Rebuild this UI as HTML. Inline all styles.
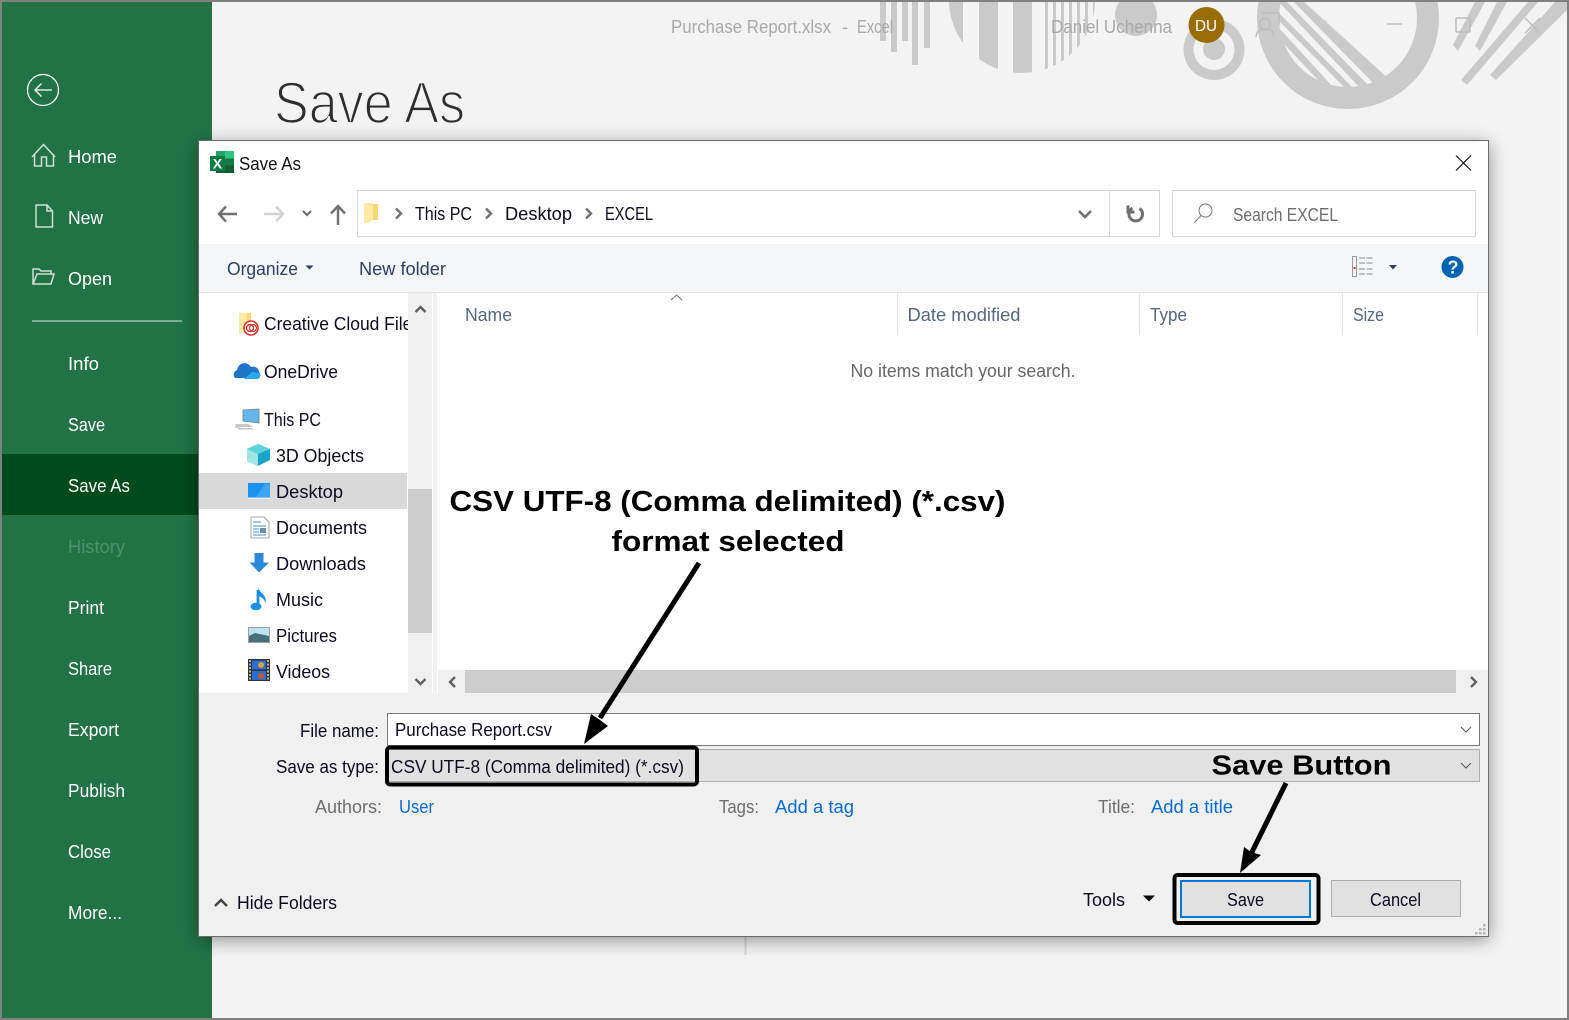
<!DOCTYPE html>
<html lang="en"><head><meta charset="utf-8"><title>Save As</title>
<style>
html,body{margin:0;padding:0;width:1569px;height:1020px;overflow:hidden;background:#f3f3f3}
svg{display:block}
text{font-family:"Liberation Sans",sans-serif;font-size:18px;white-space:pre}
.s text{fill:#fff}
.n text{fill:#0b0b20}
.h text{fill:#56677f}
.m text{fill:#6e6e6e}
.b text{fill:#0a6bd0}
.a text{fill:#000;font-weight:bold}
</style></head><body>
<svg xmlns="http://www.w3.org/2000/svg" width="1569" height="1020" viewBox="0 0 1569 1020">
<defs>
<filter id="sh" x="-5%" y="-8%" width="110%" height="116%"><feDropShadow dx="0" dy="3" stdDeviation="9" flood-color="#000" flood-opacity=".42"/></filter>
<clipPath id="c1"><circle cx="1022" cy="0" r="73"/></clipPath>
<clipPath id="c2"><circle cx="1348" cy="18" r="69"/></clipPath>
<clipPath id="c3"><rect x="199" y="293" width="209" height="400"/></clipPath>
<clipPath id="c4"><rect x="2" y="2" width="1565" height="1016"/></clipPath>
</defs>
<rect width="1569" height="1020" fill="#f3f3f3"/>
<!-- decoration -->
<g fill="#cacaca" clip-path="url(#c4)">
<rect x="880" y="0" width="6" height="41"/><rect x="891" y="0" width="6" height="52"/><rect x="902" y="0" width="6" height="41"/><rect x="912" y="0" width="6" height="65"/><rect x="924" y="0" width="6" height="48"/>
<g clip-path="url(#c1)"><rect x="949" y="0" width="14" height="80"/><rect x="979" y="0" width="19" height="80"/><rect x="1013" y="0" width="19" height="80"/><rect x="1045" y="0" width="3" height="80"/><rect x="1053" y="0" width="3" height="80"/><rect x="1061" y="0" width="3" height="80"/><rect x="1069" y="0" width="3" height="80"/><rect x="1077" y="0" width="3" height="80"/><rect x="1085" y="0" width="3" height="80"/><rect x="1093" y="0" width="3" height="80"/></g>
<circle cx="1136" cy="15" r="21"/>
<path fill-rule="evenodd" d="M1214 19a30.500 30.500 0 1 0 .01 0zM1214 29a20.500 20.500 0 1 1-.01 0z"/>
<circle cx="1214" cy="49" r="11"/>
<circle cx="1348" cy="18" r="80" fill="none" stroke="#cacaca" stroke-width="22"/>
<g clip-path="url(#c2)">
<polygon points="1302,0 1390,80 1373,83 1292,0"/>
<polygon points="1285,0 1370,87 1360,88 1277,0"/>
<polygon points="1279,13 1355,90 1347,90 1279,21"/>
<polygon points="1279,28 1333,87 1320,82 1285,45 1279,45"/>
</g>
<polygon points="1453,45 1458,51 1485,2 1475,2"/>
<polygon points="1475,46 1480,51 1507,2 1497,2"/>
<polygon points="1461,80 1467,85 1538,2 1528,2"/>
<polygon points="1490,75 1496,80 1567,10 1567,-5 1555,2"/>
</g>
<!-- window controls -->
<g fill="none" stroke="#bdbdbd" stroke-width="1.500">
<path d="M1387 24h15"/><rect x="1456" y="18" width="14" height="14" rx="1"/><path d="M1525 18l15 15M1540 18l-15 15"/>
<circle cx="1265" cy="24" r="5.500"/><path d="M1256 37c1-7 4-8 9-8s8 1 9 8M1262 13h17v12"/>
</g>
<text x="1319" y="31" fill="#cfcfcf" style="font-size:16px">?</text>
<g fill="#a9a9a9">
<text x="671" y="33" textLength="160" lengthAdjust="spacingAndGlyphs">Purchase Report.xlsx</text>
<text x="842" y="33">-</text>
<text x="857" y="33" textLength="36" lengthAdjust="spacingAndGlyphs">Excel</text>
<text x="1051" y="33" textLength="121" lengthAdjust="spacingAndGlyphs">Daniel Uchenna</text>
</g>
<circle cx="1206.500" cy="25" r="18" fill="#9a6c06"/>
<text x="1195" y="31" fill="#fff" textLength="22" lengthAdjust="spacingAndGlyphs" style="font-size:16px">DU</text>
<text x="274" y="123" fill="#2e2e2e" stroke="#f3f3f3" stroke-width="1.800" style="font-size:58px" textLength="191" lengthAdjust="spacingAndGlyphs">Save As</text>
<path d="M745.500 930v25" stroke="#d6d6d6" stroke-width="2"/>
<!-- sidebar -->
<rect x="2" y="2" width="210" height="1016" fill="#217346"/>
<rect x="2" y="454" width="210" height="61" fill="#004b1c"/>
<circle cx="43" cy="90" r="15.500" fill="none" stroke="#fff" stroke-width="1.300"/>
<path d="M35 90h17M41.500 83.500L35 90l6.500 6.500" fill="none" stroke="#fff" stroke-width="1.300"/>
<g fill="none" stroke="#cfe0d6" stroke-width="1.500">
<path d="M32 157l11.500-12.500L55 157M34.500 154v12h7v-9h5v9h7v-12"/>
<path d="M36 205h11l5.500 6v16H36zM47 205v6h5.500"/>
<path d="M33 284v-15h6l2 2h10v3M33 284h18l3-10H37z"/>
</g>
<rect x="32" y="320" width="150" height="2" fill="#80ad92"/>
<g class="s">
<text x="68" y="163" textLength="49" lengthAdjust="spacingAndGlyphs">Home</text>
<text x="68" y="224" textLength="35" lengthAdjust="spacingAndGlyphs">New</text>
<text x="68" y="285" textLength="44" lengthAdjust="spacingAndGlyphs">Open</text>
<text x="68" y="370" textLength="31" lengthAdjust="spacingAndGlyphs">Info</text>
<text x="68" y="431" textLength="37" lengthAdjust="spacingAndGlyphs">Save</text>
<text x="68" y="492" textLength="62" lengthAdjust="spacingAndGlyphs">Save As</text>
<text x="68" y="553" textLength="57" lengthAdjust="spacingAndGlyphs" style="fill:#4f9069">History</text>
<text x="68" y="614" textLength="36" lengthAdjust="spacingAndGlyphs">Print</text>
<text x="68" y="675" textLength="44" lengthAdjust="spacingAndGlyphs">Share</text>
<text x="68" y="736" textLength="51" lengthAdjust="spacingAndGlyphs">Export</text>
<text x="68" y="797" textLength="57" lengthAdjust="spacingAndGlyphs">Publish</text>
<text x="68" y="858" textLength="43" lengthAdjust="spacingAndGlyphs">Close</text>
<text x="68" y="919" textLength="54" lengthAdjust="spacingAndGlyphs">More...</text>
</g>
<!-- page border -->
<rect x="1" y="1" width="1567" height="1018" fill="none" stroke="#808080" stroke-width="2"/>
<!-- dialog -->
<rect x="199" y="141" width="1290" height="796" fill="#f0f0f0" filter="url(#sh)"/>
<rect x="199" y="141" width="1290" height="103" fill="#fff"/>
<rect x="199" y="244" width="1290" height="48" fill="#f5f6f7"/>
<rect x="199" y="292" width="1290" height="1" fill="#e3e3e3"/>
<rect x="199" y="293" width="1290" height="400" fill="#fff"/>
<rect x="198.500" y="140.500" width="1290" height="796" fill="none" stroke="#6b6b6b" stroke-width="1"/>
<!-- excel icon -->
<rect x="216" y="151" width="18" height="22" fill="#185c37"/><rect x="225" y="151" width="9" height="7.500" fill="#33c481"/><rect x="216" y="151" width="9" height="7.500" fill="#21a366"/><rect x="225" y="158.500" width="9" height="7" fill="#107c41"/>
<rect x="210" y="156" width="15" height="15" fill="#107c41"/><text x="212.800" y="168.500" fill="#fff" style="font-size:14px;font-weight:bold">X</text>
<text x="239" y="170" fill="#111" textLength="62" lengthAdjust="spacingAndGlyphs">Save As</text>
<path d="M1456 155.500l15 15M1471 155.500l-15 15" stroke="#111" stroke-width="1.200" fill="none"/>
<!-- nav -->
<g fill="none" stroke-width="2.400">
<path d="M219 214h18M226 206.500L219 214l7 7.500" stroke="#707070"/>
<path d="M264 214h19M276 206.500l7 7.500-7 7.500" stroke="#d2d2d2"/>
<path d="M303 211l4 4 4-4" stroke="#6e6e6e" stroke-width="2.200"/>
<path d="M338 225v-18M331 213.500l7-7.500 7 7.500" stroke="#707070"/>
</g>
<rect x="357.500" y="190.500" width="802" height="46" fill="#fff" stroke="#d9d9d9"/>
<path d="M1109.500 190v47" stroke="#d9d9d9"/>
<rect x="1172.500" y="190.500" width="303" height="46" fill="#fff" stroke="#d9d9d9"/>
<path d="M364 204h8l6 0v16h-10l-4 3z" fill="#f8d775"/><path d="M364 203h9v17l-5 3h-4z" fill="#ffe9a6"/>
<g fill="none" stroke="#707070" stroke-width="2.400">
<path d="M396 208.500l5 5-5 5M486 208.500l5 5-5 5M586 208.500l5 5-5 5"/>
<path d="M1079 211l6 6 6-6" stroke-width="2.600"/>
<path d="M1139.500 208.500a6.800 6.800 0 1 1-7-.3M1128 205.500v6.500h6.500" stroke-width="3"/>
</g>
<g fill="none" stroke="#777" stroke-width="1">
<circle cx="1205.500" cy="210.500" r="6.500"/><path d="M1201 215.500l-6.500 7"/>
</g>
<g class="n">
<text x="415" y="220" textLength="57" lengthAdjust="spacingAndGlyphs">This PC</text>
<text x="505" y="220" textLength="67" lengthAdjust="spacingAndGlyphs">Desktop</text>
<text x="605" y="220" textLength="48" lengthAdjust="spacingAndGlyphs">EXCEL</text>
</g>
<text x="1233" y="221" fill="#6d6d6d" textLength="105" lengthAdjust="spacingAndGlyphs">Search EXCEL</text>
<!-- toolbar -->
<g fill="#2c3f63">
<text x="227" y="275" textLength="71" lengthAdjust="spacingAndGlyphs">Organize</text>
<text x="359" y="275" textLength="87" lengthAdjust="spacingAndGlyphs">New folder</text>
<path d="M305.500 265.500h8l-4 4z"/><path d="M1389 265h8l-4 4.500z"/>
</g>
<g fill="none" stroke="#888">
<rect x="1352.500" y="256.500" width="4" height="20" stroke="#999"/>
<path d="M1359 258h15M1359 263h15M1359 269h15M1359 274h15" stroke-dasharray="6 1.500"/>
</g>
<rect x="1353.500" y="267" width="2" height="2" fill="#c33"/>
<circle cx="1452.500" cy="267" r="11" fill="#0063b1"/><text x="1447.500" y="273.500" fill="#fff" style="font-weight:bold;font-size:18px">?</text>
<!-- nav pane -->
<rect x="199" y="473" width="208" height="36" fill="#d9d9d9"/>
<rect x="408" y="293" width="24" height="400" fill="#f0f0f0"/>
<rect x="408" y="489" width="24" height="144" fill="#cdcdcd"/>
<rect x="433" y="293" width="4" height="400" fill="#f0f0f0"/>
<path d="M415.500 312l5-5 5 5M415.500 679l5 5 5-5" fill="none" stroke="#606060" stroke-width="2.400"/>
<g class="n">
<g clip-path="url(#c3)"><text x="264" y="330" textLength="157" lengthAdjust="spacingAndGlyphs">Creative Cloud Files</text></g>
<text x="264" y="378" textLength="74" lengthAdjust="spacingAndGlyphs">OneDrive</text>
<text x="264" y="426" textLength="57" lengthAdjust="spacingAndGlyphs">This PC</text>
<text x="276" y="462" textLength="88" lengthAdjust="spacingAndGlyphs">3D Objects</text>
<text x="276" y="498" textLength="67" lengthAdjust="spacingAndGlyphs">Desktop</text>
<text x="276" y="534" textLength="91" lengthAdjust="spacingAndGlyphs">Documents</text>
<text x="276" y="570" textLength="90" lengthAdjust="spacingAndGlyphs">Downloads</text>
<text x="276" y="606" textLength="47" lengthAdjust="spacingAndGlyphs">Music</text>
<text x="276" y="642" textLength="61" lengthAdjust="spacingAndGlyphs">Pictures</text>
<text x="276" y="678" textLength="54" lengthAdjust="spacingAndGlyphs">Videos</text>
</g>
<!-- nav icons -->
<path d="M239 313h12v9l4 2v8h-12l-4 2z" fill="#f8d775"/><path d="M239 313h8v18l-8 3z" fill="#ffe9a6"/>
<circle cx="251" cy="328" r="7" fill="#fff" stroke="#e2372b" stroke-width="1.600"/><circle cx="250" cy="328" r="3.500" fill="none" stroke="#e2372b" stroke-width="1.400"/><circle cx="253" cy="328" r="3.500" fill="none" stroke="#e2372b" stroke-width="1.200"/>
<path d="M235 378a5 5 0 0 1 2-8 7.500 7.500 0 0 1 14-3 6 6 0 0 1 8 5 3.500 3.500 0 0 1-1 6z" fill="#1c75c9"/><path d="M244 379l8-7 7 1a3.500 3.500 0 0 1-1 6z" fill="#29a8ea"/>
<path d="M243 410l16-1v14l-16-2z" fill="#65b7ea" stroke="#6c7f8f" stroke-width=".8"/><path d="M236 424l12 0 6 3h-10l-9 1zM238 428h15v1.500h-15z" fill="#c4c8cc"/>
<polygon points="258,444 270,449 270,460 258,466 247,461 247,449" fill="#19a5c7"/><polygon points="258,444 270,449 258,454 247,449" fill="#5fd3dc"/><polygon points="247,449 258,454 258,466 247,461" fill="#9fe5e5"/>
<rect x="248" y="483" width="22" height="16" fill="#1a90f0"/><rect x="248" y="497.500" width="22" height="1.500" fill="#e8f3ff"/><path d="M256 497l9-13h5v13z" fill="#3ba6f5"/>
<path d="M251 517h13l5 5v16h-18z" fill="#fff" stroke="#a5a5a5"/><path d="M253 526h13M253 529h6M253 532h6M253 535h13M253 522h8" stroke="#3a8fdc" stroke-width="1"/><rect x="260" y="528" width="6" height="5" fill="#6b8da6"/>
<path d="M254.500 553h9v9.500h5.500l-10 10-9.500-10h5z" fill="#2b88d8"/>
<path d="M258 590v17" stroke="#1a8fe3" stroke-width="2.800"/><ellipse cx="256" cy="606.500" rx="5.500" ry="3.800" fill="#1a8fe3"/><path d="M258.500 588c1 5 9 7 7 15-1-4-4-6-7-7z" fill="#1a8fe3"/>
<rect x="248.500" y="627.500" width="21" height="15" fill="#bfe0f0" stroke="#a0a0a0"/><path d="M249 636l6-3 14 3v6h-20z" fill="#48707c"/>
<rect x="248" y="659" width="22" height="22" fill="#333"/><rect x="252" y="660.500" width="14" height="9" fill="#2a6fd6"/><rect x="252" y="671" width="14" height="9" fill="#2a6fd6"/><circle cx="261" cy="665" r="3" fill="#d9a23a"/><circle cx="261" cy="676" r="3" fill="#c7542a"/>
<path d="M250 660v20M268 660v20" stroke="#ddd" stroke-width="1.500" stroke-dasharray="2 1.500"/>
<!-- columns -->
<path d="M897.500 293v42M1139.500 293v42M1342.500 293v42M1477.500 293v42" stroke="#e5e5e5"/>
<path d="M671 300l5.500-5 5.500 5" fill="none" stroke="#707070"/>
<g class="h">
<text x="465" y="321" textLength="47" lengthAdjust="spacingAndGlyphs">Name</text>
<text x="907.500" y="321" textLength="113" lengthAdjust="spacingAndGlyphs">Date modified</text>
<text x="1150" y="321" textLength="37" lengthAdjust="spacingAndGlyphs">Type</text>
<text x="1353" y="321" textLength="31" lengthAdjust="spacingAndGlyphs">Size</text>
</g>
<text x="850.500" y="377" fill="#666" textLength="225" lengthAdjust="spacingAndGlyphs">No items match your search.</text>
<!-- h scrollbar -->
<rect x="438" y="670" width="1050" height="23" fill="#f0f0f0"/>
<rect x="465" y="670" width="991" height="23" fill="#cdcdcd"/>
<path d="M455 677l-5 5 5 5M1471 677l5 5-5 5" fill="none" stroke="#606060" stroke-width="2.400"/>
<!-- bottom form -->
<rect x="387.500" y="713.500" width="1092" height="32" fill="#fff" stroke="#7a7a7a"/>
<rect x="387.500" y="749.500" width="1092" height="32" fill="#e1e1e1" stroke="#adadad"/>
<path d="M1461 727l5 5 5-5M1461 763l5 5 5-5" fill="none" stroke="#555"/>
<g class="n">
<text x="300" y="737" textLength="79" lengthAdjust="spacingAndGlyphs">File name:</text>
<text x="395" y="736" textLength="157" lengthAdjust="spacingAndGlyphs">Purchase Report.csv</text>
<text x="276" y="773" textLength="103" lengthAdjust="spacingAndGlyphs">Save as type:</text>
<text x="391" y="773" textLength="293" lengthAdjust="spacingAndGlyphs">CSV UTF-8 (Comma delimited) (*.csv)</text>
<text x="237" y="909" textLength="100" lengthAdjust="spacingAndGlyphs">Hide Folders</text>
<text x="1083" y="906" textLength="42" lengthAdjust="spacingAndGlyphs">Tools</text>
</g>
<g class="m">
<text x="315" y="813" textLength="67" lengthAdjust="spacingAndGlyphs">Authors:</text>
<text x="719" y="813" textLength="40" lengthAdjust="spacingAndGlyphs">Tags:</text>
<text x="1098" y="813" textLength="37" lengthAdjust="spacingAndGlyphs">Title:</text>
</g>
<g class="b">
<text x="399" y="813" textLength="35" lengthAdjust="spacingAndGlyphs">User</text>
<text x="775" y="813" textLength="79" lengthAdjust="spacingAndGlyphs">Add a tag</text>
<text x="1151" y="813" textLength="82" lengthAdjust="spacingAndGlyphs">Add a title</text>
</g>
<path d="M215 906l6-6 6 6" fill="none" stroke="#444" stroke-width="2.400"/>
<path d="M1143 895.500h12l-6 6z" fill="#000"/>
<rect x="1181" y="881" width="129" height="36" fill="#e1e1e1" stroke="#0078d7" stroke-width="2"/>
<rect x="1331.500" y="880.500" width="129" height="36" fill="#e1e1e1" stroke="#adadad" stroke-width="1"/>
<g class="n">
<text x="1227" y="906" textLength="37" lengthAdjust="spacingAndGlyphs">Save</text>
<text x="1370" y="906" textLength="51" lengthAdjust="spacingAndGlyphs">Cancel</text>
</g>
<g fill="#b5b5b5"><rect x="1483" y="924" width="2.500" height="2.500"/><rect x="1479" y="928" width="2.500" height="2.500"/><rect x="1483" y="928" width="2.500" height="2.500"/><rect x="1475" y="932" width="2.500" height="2.500"/><rect x="1479" y="932" width="2.500" height="2.500"/><rect x="1483" y="932" width="2.500" height="2.500"/></g>
<!-- annotations -->
<rect x="387" y="747.500" width="310" height="37" rx="3" fill="none" stroke="#000" stroke-width="4"/>
<rect x="1174.500" y="875" width="144" height="48" rx="3" fill="none" stroke="#000" stroke-width="4"/>
<g class="a">
<text x="449.500" y="511" style="font-size:29px" textLength="556" lengthAdjust="spacingAndGlyphs">CSV UTF-8 (Comma delimited) (*.csv)</text>
<text x="611.500" y="551" style="font-size:29px" textLength="233" lengthAdjust="spacingAndGlyphs">format selected</text>
<text x="1211.500" y="774.500" style="font-size:28px" textLength="180" lengthAdjust="spacingAndGlyphs">Save Button</text>
</g>
<path d="M699 563L600 718" stroke="#000" stroke-width="5" fill="none"/>
<polygon points="584,744 591,714 600,720 608,726"/>
<path d="M1286 783L1250 856" stroke="#000" stroke-width="5" fill="none"/>
<polygon points="1240,873 1244,847 1251,852 1261,855"/>
</svg>
</body></html>
